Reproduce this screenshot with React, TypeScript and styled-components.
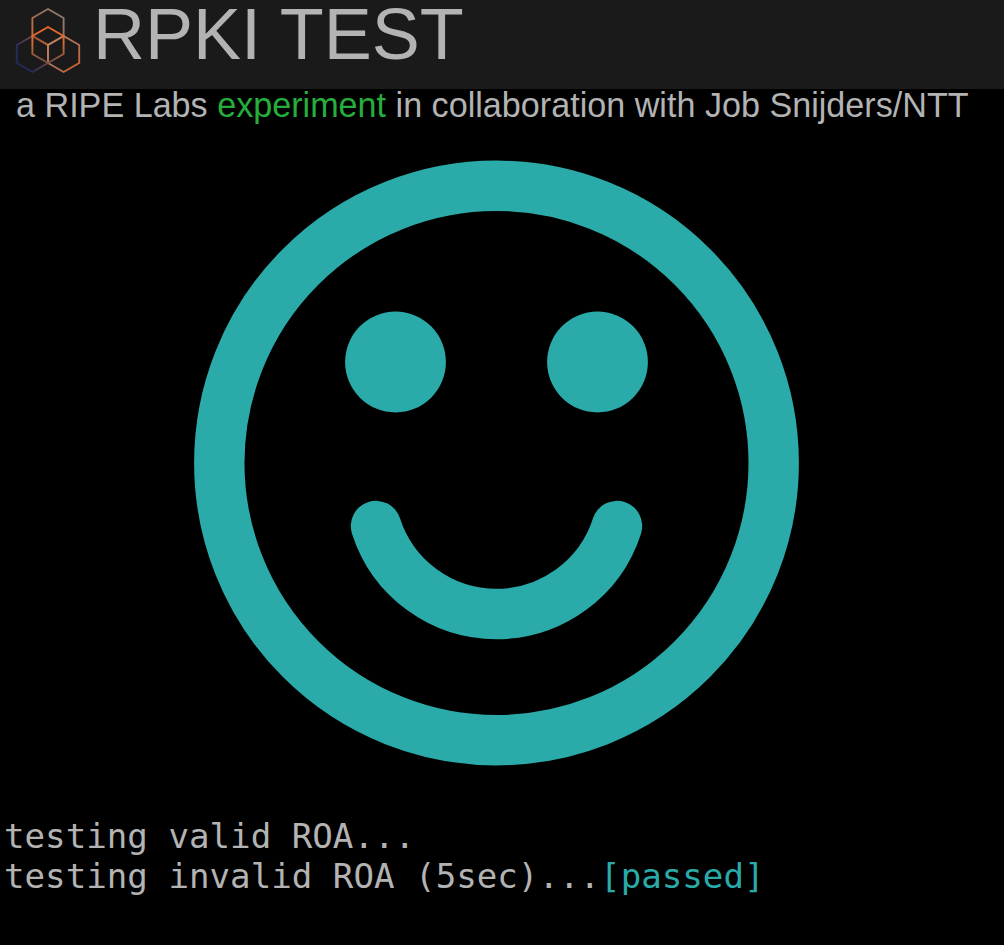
import React from "react";
import styled, { createGlobalStyle } from "styled-components";

const Global = createGlobalStyle`
  html, body { margin: 0; padding: 0; background: #000; }
`;

const Page = styled.div`
  width: 1004px;
  height: 945px;
  overflow: hidden;
  background: #000;
  font-family: "Liberation Sans", Arial, sans-serif;
  color: #b3b3b3;
`;

const Header = styled.header`
  height: 89px;
  background: #1a1a1a;
  display: flex;
  align-items: flex-start;
  padding-left: 13px;
  box-sizing: border-box;
`;

const Logo = styled.svg`
  width: 72px;
  height: 80px;
  flex: none;
  margin: 4px 5px 0 0;
`;

const Title = styled.h1`
  margin: 0 0 0 3px;
  font-size: 72px;
  font-weight: 400;
  line-height: 68px;
  color: #b3b3b3;
`;

const Subtitle = styled.p`
  margin: 0;
  padding-left: 16px;
  font-size: 34.15px;
  line-height: 32px;
  white-space: nowrap;
`;

const Accent = styled.span`
  color: #25ae3c;
`;

const Face = styled.svg`
  display: block;
  width: 1004px;
  height: 660px;
  margin-top: 2px;
`;

const Log = styled.div`
  margin-top: 33px;
  padding-left: 4px;
  font-family: "DejaVu Sans Mono", monospace;
  font-size: 34.15px;
  line-height: 40px;
  white-space: pre;
`;

const Passed = styled.span`
  color: #2aaaa8;
`;

const hex = (cx: number, cy: number) =>
  `${cx},${cy - 18} ${cx + 15.6},${cy - 9} ${cx + 15.6},${cy + 9} ${cx},${cy + 18} ${cx - 15.6},${cy + 9} ${cx - 15.6},${cy - 9}`;

export default function App() {
  return (
    <Page>
      <Global />
      <Header>
        <Logo viewBox="13 4 72 80" aria-hidden="true">
          <defs>
            <linearGradient id="top" x1="0" y1="1" x2="1" y2="0">
              <stop offset="0" stopColor="#e0682a" />
              <stop offset="0.55" stopColor="#94705c" />
              <stop offset="1" stopColor="#8d7c72" />
            </linearGradient>
            <linearGradient id="left" x1="1" y1="0" x2="0" y2="0.8">
              <stop offset="0" stopColor="#e0682a" />
              <stop offset="0.45" stopColor="#5a3f4a" />
              <stop offset="0.8" stopColor="#272c5c" />
              <stop offset="1" stopColor="#24285c" />
            </linearGradient>
            <linearGradient id="right" x1="0" y1="0" x2="1" y2="1">
              <stop offset="0" stopColor="#c98a60" />
              <stop offset="0.5" stopColor="#a87058" />
              <stop offset="1" stopColor="#d8602a" />
            </linearGradient>
            <linearGradient id="mid" x1="0" y1="0" x2="0" y2="1">
              <stop offset="0" stopColor="#ea6a28" />
              <stop offset="0.45" stopColor="#d86c30" />
              <stop offset="1" stopColor="#6e4f48" />
            </linearGradient>
          </defs>
          <g fill="none" strokeWidth="1.9" strokeLinejoin="round">
            <polygon points={hex(48, 27)} stroke="url(#top)" />
            <polygon points={hex(32.4, 54)} stroke="url(#left)" />
            <polygon points={hex(63.6, 54)} stroke="url(#right)" />
            <polygon points={hex(48, 45)} stroke="url(#mid)" />
          </g>
        </Logo>
        <Title>RPKI TEST</Title>
      </Header>
      <Subtitle>
        a RIPE Labs <Accent>experiment</Accent> in collaboration with Job Snijders/NTT
      </Subtitle>
      <Face viewBox="0 123 1004 660" aria-hidden="true">
        <g fill="none" stroke="#2aaaa8" strokeWidth="50.4" strokeLinecap="round">
          <circle cx="496.5" cy="463" r="277.2" />
          <path d="M376 526 A126.5 126.5 0 0 0 617 526" />
        </g>
        <circle cx="395.5" cy="362" r="50.4" fill="#2aaaa8" />
        <circle cx="597.5" cy="362" r="50.4" fill="#2aaaa8" />
      </Face>
      <Log>
        {"testing valid ROA...\ntesting invalid ROA (5sec)..."}
        <Passed>[passed]</Passed>
      </Log>
    </Page>
  );
}
